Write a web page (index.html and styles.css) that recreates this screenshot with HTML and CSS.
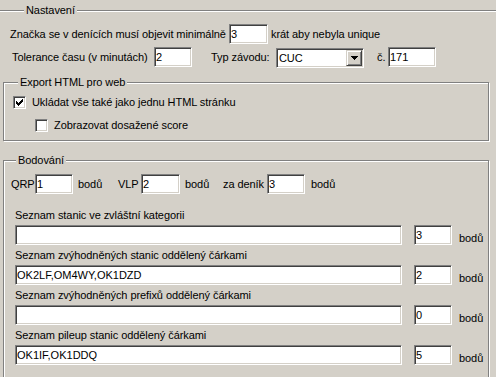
FILE: index.html
```html
<!DOCTYPE html>
<html lang="cs">
  <head>
    <meta charset="UTF-8" />
    <meta name="viewport" content="width=device-width, initial-scale=1.0" />
    <title>Nastavení závodu</title>
    <link rel="stylesheet" href="styles.css">
  </head>
  <body>
    <!-- Nastavení -->
    <fieldset class="group group-open">
      <legend>Nastavení</legend>
      <div class="row">
        <span class="text min-text">Značka se v denících musí objevit minimálně</span>
        <input class="edit w39" type="text" value="3">
        <span class="text unique-text">krát aby nebyla unique</span>
      </div>
      <div class="row row-second">
        <span class="text tolerance-text">Tolerance času (v minutách)</span>
        <input class="edit w38" type="text" value="2">
        <span class="text type-text">Typ závodu:</span>
        <div class="combo">
          <span class="combo-text">CUC</span>
          <span class="combo-btn">
            <svg width="7" height="4" viewBox="0 0 7 4" shape-rendering="crispEdges"><polygon points="0,0 7,0 4,4 3,4" fill="#000"/></svg>
          </span>
        </div>
        <span class="text number-text">č.</span>
        <input class="edit w48 number-edit" type="text" value="171">
      </div>
    </fieldset>

    <!-- Export HTML -->
    <fieldset class="group group-export">
      <legend>Export HTML pro web</legend>
      <label class="check-row">
        <span class="check">
          <svg width="7" height="7" viewBox="0 0 7 7" shape-rendering="crispEdges"><polygon points="0,2 2,4 7,-1 7,2 2,7 0,5" fill="#000"/></svg>
        </span>
        <span>Ukládat vše také jako jednu HTML stránku</span>
      </label>
      <label class="check-row check-sub">
        <span class="check"></span>
        <span>Zobrazovat dosažené score</span>
      </label>
    </fieldset>

    <!-- Bodování -->
    <fieldset class="group group-points">
      <legend>Bodování</legend>
      <div class="row">
        <span class="text qrp-text">QRP</span>
        <input class="edit w38" type="text" value="1">
        <span class="text unit-text">bodů</span>
        <span class="text vlp-text">VLP</span>
        <input class="edit w39" type="text" value="2">
        <span class="text unit-text unit-narrow">bodů</span>
        <span class="text day-text">za deník</span>
        <input class="edit w38" type="text" value="3">
        <span class="text day-unit">bodů</span>
      </div>

      <div class="list">
        <div class="field">
          <div class="field-label">Seznam stanic ve zvláštní kategorii</div>
          <div class="field-row">
            <input class="edit wide" type="text" value="">
            <input class="edit w38 pts-edit" type="text" value="3">
            <span class="pts-unit">bodů</span>
          </div>
        </div>
        <div class="field">
          <div class="field-label">Seznam zvýhodněných stanic oddělený čárkami</div>
          <div class="field-row">
            <input class="edit wide" type="text" value="OK2LF,OM4WY,OK1DZD">
            <input class="edit w38 pts-edit" type="text" value="2">
            <span class="pts-unit">bodů</span>
          </div>
        </div>
        <div class="field">
          <div class="field-label">Seznam zvýhodněných prefixů oddělený čárkami</div>
          <div class="field-row">
            <input class="edit wide" type="text" value="">
            <input class="edit w38 pts-edit" type="text" value="0">
            <span class="pts-unit">bodů</span>
          </div>
        </div>
        <div class="field">
          <div class="field-label">Seznam pileup stanic oddělený čárkami</div>
          <div class="field-row">
            <input class="edit wide" type="text" value="OK1IF,OK1DDQ">
            <input class="edit w38 pts-edit" type="text" value="5">
            <span class="pts-unit">bodů</span>
          </div>
        </div>
      </div>
    </fieldset>
  </body>
</html>
```

FILE: styles.css
```css
* {
  box-sizing: border-box;
}

body {
  margin: 0;
  width: 496px;
  height: 377px;
  overflow: hidden;
  background-color: #d4d0c8;
  font: 11px/13px "Liberation Sans", Arial, sans-serif;
  letter-spacing: -0.07px;
  color: #000;
}

/* Etched group boxes */
.group {
  margin: 0 7px 0 3px;
  padding: 0;
  min-width: 0;
  border: 1px solid #808080;
  box-shadow: inset 1px 1px #fff, 1px 1px #fff;
}

.group legend {
  margin-left: 5px;
  padding: 0 2px;
  line-height: 13px;
  background-color: #d4d0c8;
}

/* top group only shows its top line */
.group-open {
  margin: 4px -10px 0 -10px;
  padding: 7px 0 8px 20px;
  border-left: none;
  border-right: none;
  border-bottom: none;
  box-shadow: inset 0 1px #fff;
}

.group-open legend {
  margin-left: 14px;
}

.group-export {
  padding: 7px 0 8px 9px;
}

.group-points {
  margin-top: 13px;
  padding: 7px 0 40px 7px;
}

/* rows: labels get fixed widths like on the original form */
.row {
  display: flex;
  align-items: flex-start;
}

.row-second {
  margin-top: 3px;
}

.text {
  flex: none;
  line-height: 20px;
  white-space: nowrap;
}

.min-text { width: 219px; }
.unique-text { margin-left: 3px; }
.tolerance-text { width: 142px; margin-left: 2px; }
.type-text { width: 65px; margin-left: 19px; }
.number-text { width: 11px; margin-left: 13px; }
.number-edit { margin-top: 1px; }

.qrp-text { width: 24px; }
.unit-text { width: 40px; margin-left: 5px; }
.unit-narrow { width: 38px; }
.vlp-text { width: 23px; }
.day-text { width: 44px; }
.day-unit { margin-left: 6px; }

/* sunken edit box */
.edit {
  flex: none;
  height: 20px;
  margin: 0;
  padding: 0 1px;
  border: 1px solid;
  border-color: #808080 #fff #fff #808080;
  box-shadow: inset 1px 1px #404040, inset -1px -1px #d4d0c8;
  background-color: #fff;
  font: 11px "Liberation Sans", Arial, sans-serif;
  color: #000;
  outline: none;
}

.w38 { width: 38px; }
.w39 { width: 39px; }
.w48 { width: 48px; }
.wide { width: 387px; }

/* combo box */
.combo {
  flex: none;
  display: flex;
  width: 88px;
  height: 20px;
  margin-top: 1px;
  padding: 1px;
  border: 1px solid;
  border-color: #808080 #fff #fff #808080;
  box-shadow: inset 1px 1px #404040, inset -1px -1px #d4d0c8;
  background-color: #fff;
}

.combo-text {
  flex: 1;
  padding-left: 1px;
  line-height: 16px;
}

.combo-btn {
  width: 16px;
  height: 16px;
  display: flex;
  justify-content: center;
  align-items: center;
  background-color: #d4d0c8;
  border: 1px solid;
  border-color: #d4d0c8 #404040 #404040 #d4d0c8;
  box-shadow: inset 1px 1px #fff, inset -1px -1px #808080;
}

/* checkboxes */
.check-row {
  display: flex;
  align-items: center;
  height: 13px;
}

.check-sub {
  margin: 10px 0 0 22px;
}

.check {
  width: 13px;
  height: 13px;
  margin-right: 6px;
  display: flex;
  justify-content: center;
  align-items: center;
  border: 1px solid;
  border-color: #808080 #fff #fff #808080;
  box-shadow: inset 1px 1px #404040, inset -1px -1px #d4d0c8;
  background-color: #fff;
}

/* list of stations */
.list {
  margin-left: 4px;
}

.field {
  margin-top: 4px;
}

.field:first-child {
  margin-top: 15px;
}

.field-label {
  margin-bottom: 3px;
}

.field-row {
  display: flex;
}

.pts-edit {
  margin-left: 12px;
}

.pts-unit {
  align-self: flex-end;
  margin-left: 7px;
}
```
